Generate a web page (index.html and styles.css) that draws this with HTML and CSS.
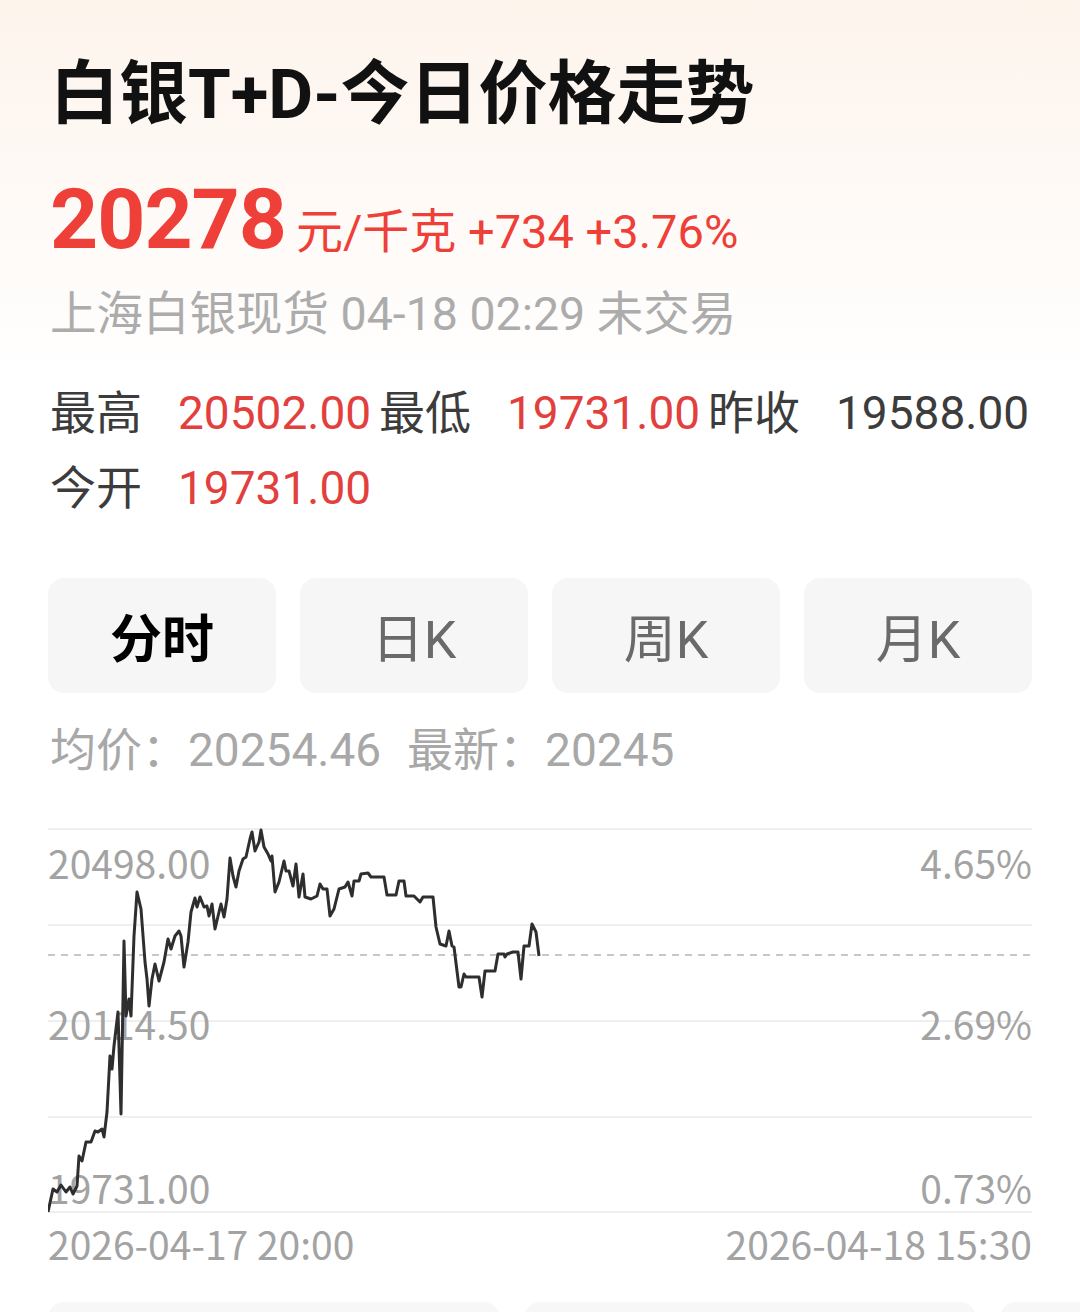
FILE: index.html
```html
<!DOCTYPE html>
<html lang="zh-CN">
<head>
<meta charset="utf-8">
<title>白银T+D-今日价格走势</title>
<link rel="stylesheet" href="styles.css">
</head>
<body>
<div class="page">
  <h1 class="title">白银T+D-今日价格走势</h1>
  <div class="price-row">
    <span class="price">20278</span>
    <span class="unit">元/千克 +734 +3.76%</span>
  </div>
  <div class="sub">上海白银现货 04-18 02:29 未交易</div>

  <div class="stats">
    <div class="stat"><span class="lbl">最高</span><span class="val up">20502.00</span></div>
    <div class="stat"><span class="lbl">最低</span><span class="val up">19731.00</span></div>
    <div class="stat"><span class="lbl">昨收</span><span class="val">19588.00</span></div>
    <div class="stat"><span class="lbl">今开</span><span class="val up">19731.00</span></div>
  </div>

  <div class="tabs">
    <div class="tab active">分时</div>
    <div class="tab">日K</div>
    <div class="tab">周K</div>
    <div class="tab">月K</div>
  </div>

  <div class="avg"><span>均价：20254.46</span><span class="gap">最新：20245</span></div>

  <svg class="chart" width="984" height="400" viewBox="0 0 984 400">
    <g class="grid">
      <line x1="0" y1="10" x2="984" y2="10"/>
      <line x1="0" y1="106" x2="984" y2="106"/>
      <line x1="0" y1="202" x2="984" y2="202"/>
      <line x1="0" y1="298" x2="984" y2="298"/>
      <line x1="0" y1="393" x2="984" y2="393"/>
    </g>
    <line class="base" x1="0" y1="136" x2="984" y2="136"/>
    <g class="axis">
      <text x="0" y="43">20498.00</text>
      <text x="0" y="204">20114.50</text>
      <text x="0" y="368">19731.00</text>
      <text class="r" x="984" y="43">4.65%</text>
      <text class="r" x="984" y="204">2.69%</text>
      <text class="r" x="984" y="368">0.73%</text>
    </g>
    <polyline class="line" points="0,393 5,370 9,373 13,366 18,373 22,368 25,375 29,367 31,337 34,342 38,323 43,323 47,312 50,313 54,310 56,318 59,293 62,237 64,250 66,227 70,193 73,295 76,122 78,197 81,180 83,197 86,117 89,73 93,90 97,143 99,160 101,187 104,160 107,145 111,162 116,143 120,120 123,130 127,117 131,112 133,117 136,148 140,123 143,93 147,79 149,88 152,78 156,88 159,87 161,97 164,85 167,110 171,93 173,85 176,98 179,80 182,39 185,57 188,68 191,52 195,40 198,38 202,20 204,13 207,32 211,23 213,11 216,28 220,35 223,42 224,37 227,73 231,63 236,42 238,52 241,52 245,67 248,45 251,78 255,55 257,78 263,80 269,77 272,65 275,70 279,70 282,97 286,90 291,70 297,68 300,63 304,77 306,62 311,62 313,55 320,54 323,58 336,58 339,76 348,76 351,62 356,62 358,77 366,77 372,83 375,78 385,78 388,108 392,125 398,127 401,112 404,127 406,128 411,168 413,168 416,155 418,158 431,158 434,178 437,152 447,152 450,135 456,135 457,138 459,135 465,133 470,133 473,160 476,127 481,127 484,105 488,113 491,137"/>
  </svg>

  <div class="xaxis"><span>2026-04-17 20:00</span><span>2026-04-18 15:30</span></div>

  <div class="cards">
    <div class="card"></div>
    <div class="card"></div>
    <div class="card"></div>
  </div>
</div>
</body>
</html>
```

FILE: styles.css
```css
html, body {
  margin: 0;
  padding: 0;
}
html {
  overflow: hidden;
}
body {
  width: 1080px;
  height: 1313px;
  overflow: hidden;
  background: linear-gradient(180deg, #fdf4ec 0px, #fef9f5 180px, #ffffff 380px);
  font-family: Roboto, "Noto Sans CJK SC", sans-serif;
  color: #333;
}
.page {
  padding: 0 48px;
}
.title {
  margin: 55px 0 0 2px;
  font-size: 69px;
  line-height: 80px;
  font-weight: 700;
  color: #111;
}
.price-row {
  margin-top: 40px;
  display: flex;
  align-items: baseline;
  line-height: 90px;
  color: #ee3f38;
  padding-left: 2px;
}
.price {
  font-size: 84px;
  font-weight: 700;
  letter-spacing: -1px;
}
.unit {
  font-size: 47px;
  margin-left: 10px;
}
.sub {
  margin-top: 7px;
  font-size: 46.5px;
  line-height: 60px;
  color: #acacac;
  padding-left: 2px;
}
.stats {
  margin-top: 32px;
  display: grid;
  grid-template-columns: repeat(3, 329px);
  padding-left: 2px;
}
.stat {
  display: flex;
  font-size: 46px;
  line-height: 75px;
}
.lbl {
  width: 128px;
  flex-shrink: 0;
  color: #3c3c3c;
}
.val {
  color: #3c3c3c;
}
.val.up {
  color: #e2403d;
}
.tabs {
  margin-top: 52px;
  display: grid;
  grid-template-columns: repeat(4, 228px);
  gap: 24px;
}
.tab {
  height: 115px;
  border-radius: 16px;
  background: #f6f6f6;
  display: flex;
  align-items: center;
  justify-content: center;
  font-size: 52px;
  color: #6a6a6a;
}
.tab.active {
  color: #000;
  font-weight: 700;
}
.avg {
  margin-top: 27px;
  font-size: 46px;
  line-height: 60px;
  color: #a8a8a8;
  padding-left: 2px;
}
.avg .gap {
  margin-left: 26px;
}
.chart {
  display: block;
  margin-top: 39px;
}
.grid line {
  stroke: #efefef;
  stroke-width: 2;
}
.base {
  stroke: #b5b5b5;
  stroke-width: 1.5;
  stroke-dasharray: 7 6;
}
.axis text {
  font-family: "Noto Sans CJK SC", "Noto Sans", sans-serif;
  font-size: 39px;
  fill: #a3a3a3;
  dominant-baseline: central;
}
.axis text.r {
  text-anchor: end;
}
.line {
  fill: none;
  stroke: #2e2e2e;
  stroke-width: 3;
  stroke-linejoin: round;
}
.xaxis {
  margin-top: 1px;
  display: flex;
  justify-content: space-between;
  font-family: "Noto Sans CJK SC", "Noto Sans", sans-serif;
  font-size: 39px;
  line-height: 46px;
  color: #a3a3a3;
}
.cards {
  margin-top: 36px;
  margin-right: -48px;
  height: 10px;
  display: flex;
  gap: 24px;
  overflow: hidden;
}
.card {
  flex: 0 0 452px;
  height: 40px;
  border-radius: 16px;
  background: #f7f7f7;
}
```
